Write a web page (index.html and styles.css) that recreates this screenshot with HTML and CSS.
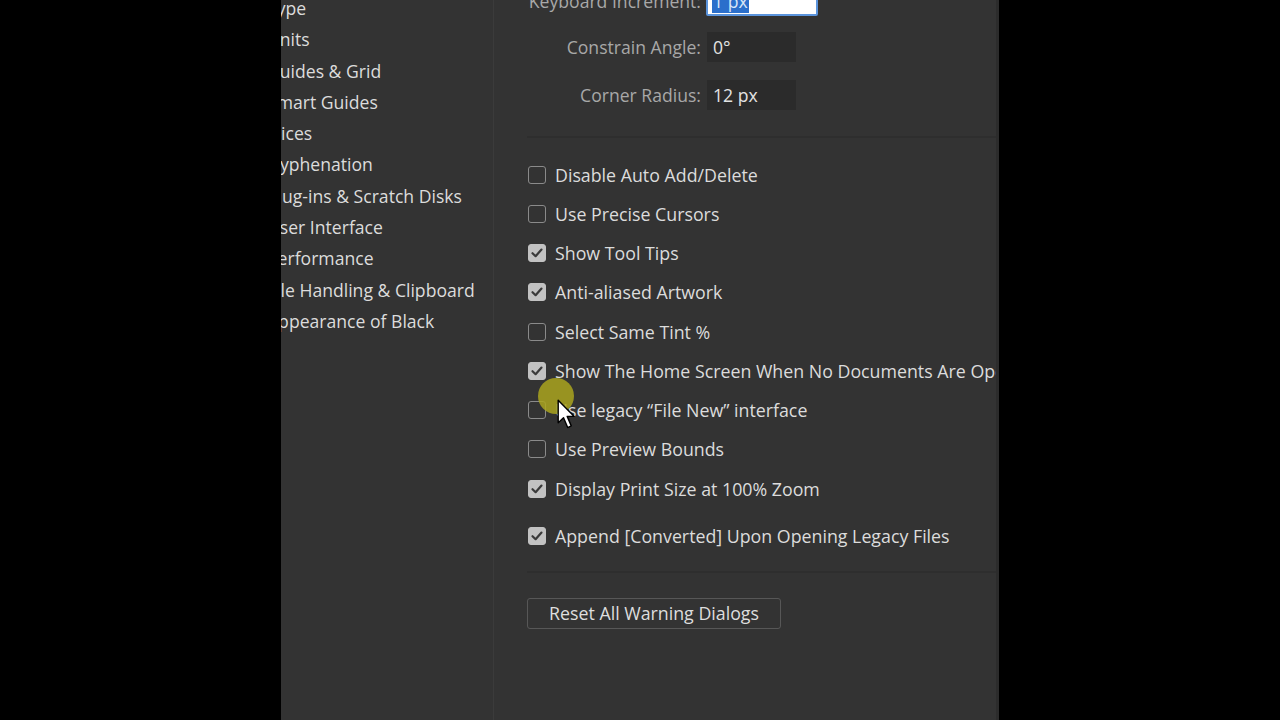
FILE: index.html
```html
<!DOCTYPE html>
<html lang="en">
<head>
    <meta charset="UTF-8">
    <meta name="viewport" content="width=device-width, initial-scale=1.0">
    <title>Preferences - General</title>
    <link rel="stylesheet" href="styles.css">
</head>
<body>
    <div class="window">
        <ul class="sidebar">
            <li>Type</li>
            <li>Units</li>
            <li>Guides &amp; Grid</li>
            <li>Smart Guides</li>
            <li>Slices</li>
            <li>Hyphenation</li>
            <li>Plug-ins &amp; Scratch Disks</li>
            <li>User Interface</li>
            <li>Performance</li>
            <li>File Handling &amp; Clipboard</li>
            <li>Appearance of Black</li>
        </ul>

        <div class="content">
            <div class="fields">
                <div class="field">
                    <label>Keyboard Increment:</label>
                    <div class="input input-focus"><span class="selected">1 px</span></div>
                </div>
                <div class="field">
                    <label>Constrain Angle:</label>
                    <div class="input">0&deg;</div>
                </div>
                <div class="field">
                    <label>Corner Radius:</label>
                    <div class="input">12 px</div>
                </div>
            </div>

            <hr class="separator">

            <div class="options">
                <div class="option"><span class="box"></span>Disable Auto Add/Delete</div>
                <div class="option"><span class="box"></span>Use Precise Cursors</div>
                <div class="option checked"><span class="box"></span>Show Tool Tips</div>
                <div class="option checked"><span class="box"></span>Anti-aliased Artwork</div>
                <div class="option"><span class="box"></span>Select Same Tint %</div>
                <div class="option checked"><span class="box"></span>Show The Home Screen When No Documents Are Open</div>
                <div class="option"><span class="box"></span>Use legacy &ldquo;File New&rdquo; interface</div>
                <div class="option"><span class="box"></span>Use Preview Bounds</div>
                <div class="option checked"><span class="box"></span>Display Print Size at 100% Zoom</div>
                <div class="option checked spaced"><span class="box"></span>Append [Converted] Upon Opening Legacy Files</div>
            </div>

            <hr class="separator">

            <button class="reset">Reset All Warning Dialogs</button>
        </div>

        <!-- recorded mouse pointer with click highlight -->
        <div class="pointer">
            <span class="halo"></span>
            <svg class="arrow" width="19" height="31" viewBox="0 0 16 26">
                <path d="M1 1 L1 20 L5.5 15.8 L9 24 L12 22.6 L8.6 14.6 L14.5 14.6 Z" fill="#fff" stroke="#000" stroke-width="1.2" stroke-linejoin="round"/>
            </svg>
        </div>
    </div>

    <script>
        // draw the check mark into every checked box
        (function() {
            const mark = '<svg width="14" height="14" viewBox="0 0 14 14"><path d="M2.5 7.2 L5.6 10.2 L11.5 3.6" fill="none" stroke="#3a3a3a" stroke-width="2.2" stroke-linecap="round" stroke-linejoin="round"/></svg>';
            document.querySelectorAll('.option.checked .box').forEach(function(box) {
                box.innerHTML = mark;
            });
        })();
    </script>
</body>
</html>
```

FILE: styles.css
```css
body {
    margin: 0;
    height: 720px;
    background-color: #000;
    display: flex;
    justify-content: center;
    font-family: "Open Sans", "DejaVu Sans", sans-serif;
    overflow: hidden;
}

.window {
    position: relative;
    width: 718px;
    height: 720px;
    background-color: #333333;
    display: flex;
    overflow: hidden;
    border-right: 3px solid #2c2c2c;
    box-sizing: border-box;
}

/* category list, scrolled so its left edge is cut off */
.sidebar {
    list-style: none;
    margin: -7px 0 0 0;
    padding: 0;
    width: 212px;
    flex-shrink: 0;
    border-right: 1px solid #3b3b3b;
    overflow: hidden;
}

.sidebar li {
    margin-left: -14px;
    height: 31.3px;
    line-height: 31.3px;
    font-size: 17.6px;
    color: #dcdcdc;
    white-space: nowrap;
}

.content {
    flex: 1;
    padding-left: 33px;
    min-width: 0;
}

.fields {
    margin-top: -14px;
    padding-bottom: 9px;
}

.field {
    display: flex;
    align-items: center;
    height: 30px;
    margin-bottom: 18px;
}

.field:first-child {
    margin-bottom: 16px;
}

.field label {
    width: 174px;
    flex-shrink: 0;
    text-align: right;
    white-space: nowrap;
    font-size: 17.6px;
    color: #a8a8a8;
    margin-right: 6px;
}

.input {
    width: 89px;
    height: 30px;
    box-sizing: border-box;
    background-color: #2b2b2b;
    color: #e2e2e2;
    font-size: 17.6px;
    line-height: 30px;
    padding-left: 6px;
}

.input-focus {
    width: 112px;
    background-color: #fff;
    border: 2px solid #5b94dc;
    border-radius: 2px;
    line-height: 26px;
    padding-left: 4px;
    margin-left: -1px;
}

.selected {
    background-color: #2b6fcb;
    color: #d8e6f7;
    padding: 0 1px;
}

.separator {
    border: none;
    border-top: 2px solid #2e2e2e;
    margin: -1px 0 17px 0;
}

.options {
    margin-bottom: 16px;
}

.option {
    display: flex;
    align-items: center;
    height: 39.25px;
    font-size: 17.8px;
    color: #dcdcdc;
    white-space: nowrap;
    margin-left: 1px;
}

.option.spaced {
    margin-top: 8px;
}

.box {
    width: 18px;
    height: 18px;
    box-sizing: border-box;
    border: 1.5px solid #8a8a8a;
    border-radius: 3px;
    margin-right: 9px;
    flex-shrink: 0;
    display: flex;
    align-items: center;
    justify-content: center;
}

.checked .box {
    background-color: #c2c2c2;
    border-color: #c2c2c2;
}

.reset {
    margin-top: 8px;
    width: 254px;
    height: 31px;
    background: transparent;
    border: 1px solid #575757;
    border-radius: 3px;
    color: #dedede;
    font-family: "Open Sans", "DejaVu Sans", sans-serif;
    font-size: 17.8px;
    padding: 0;
}

.pointer {
    position: absolute;
    left: 257px;
    top: 378px;
    width: 40px;
    height: 52px;
    pointer-events: none;
}

.halo {
    position: absolute;
    left: 0;
    top: 0;
    width: 36px;
    height: 36px;
    border-radius: 50%;
    background-color: rgba(170, 165, 30, 0.85);
}

.arrow {
    position: absolute;
    left: 19px;
    top: 21px;
}
```
